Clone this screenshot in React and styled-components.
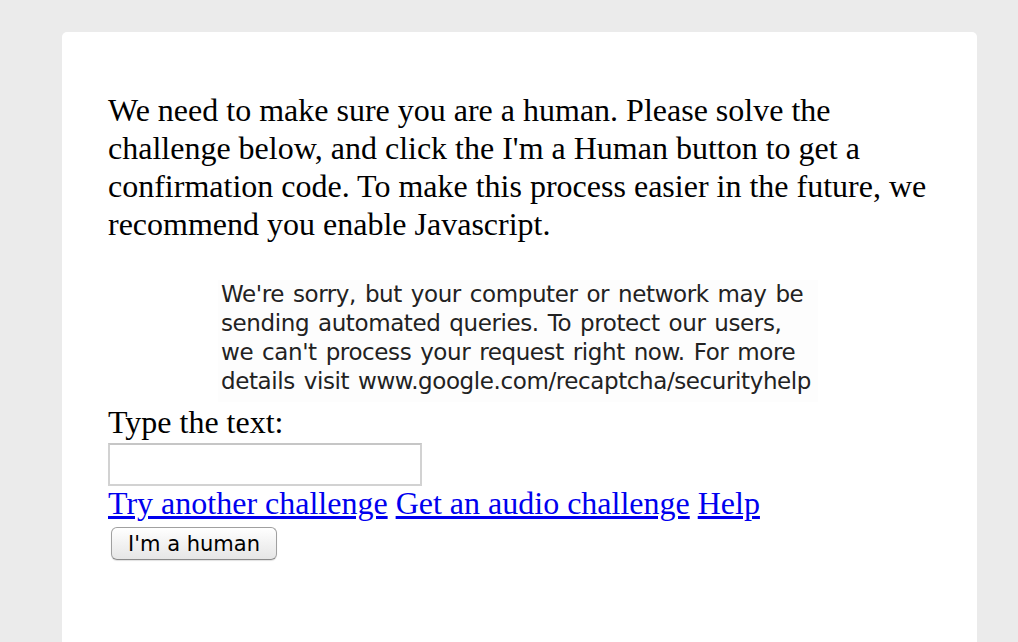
import React from "react";
import styled, { createGlobalStyle } from "styled-components";

const GlobalStyle = createGlobalStyle`
  html, body {
    margin: 0;
    padding: 0;
    background: #ebebeb;
  }
`;

const Page = styled.div`
  padding: 32px 41px 0 62px;
  height: 642px;
  box-sizing: border-box;
  overflow: hidden;
`;

const Card = styled.div`
  background: #fff;
  border-radius: 5px 5px 0 0;
  padding: 59px 30px 80px 46px;
  min-height: 610px;
  box-sizing: border-box;
  font-family: "Liberation Serif", "Times New Roman", serif;
  font-size: 32px;
  color: #000;
`;

const Intro = styled.p`
  margin: 0 0 37px 0;
  line-height: 38px;
  max-width: 840px;
`;

/* stand-in for the captcha picture: grey text on an off-white field */
const Captcha = styled.div`
  width: 600px;
  height: 122px;
  margin-left: 110px;
  box-sizing: border-box;
  padding: 0 0 0 3px;
  background: #fdfdfd;
  font-family: "DejaVu Sans", sans-serif;
  font-size: 23px;
  line-height: 29px;
  color: #222;
  letter-spacing: -0.4px;
  word-spacing: 2px;
  white-space: nowrap;
`;

const Label = styled.div`
  line-height: 41px;
`;

const TextInput = styled.input`
  display: block;
  width: 314px;
  height: 43px;
  box-sizing: border-box;
  border: 2px solid #d2d2d2;
  border-top-color: #c6c6c6;
  margin: 0;
  padding: 0;
  background: #fff;
`;

const Links = styled.div`
  line-height: 35px;
  a {
    color: #0000ee;
    margin-right: 8px;
  }
`;

const Button = styled.button`
  display: block;
  margin: 6px 0 0 3px;
  width: 166px;
  height: 33px;
  border: 1px solid #a0a0a0;
  border-bottom-color: #8a8a8a;
  border-radius: 6px;
  background: linear-gradient(#ffffff, #f2f2f2 50%, #e6e6e6);
  box-shadow: 0 1px 1px rgba(0, 0, 0, 0.12);
  font-family: "DejaVu Sans", sans-serif;
  font-size: 21px;
  color: #000;
  padding: 0;
`;

export default function App() {
  return (
    <>
      <GlobalStyle />
      <Page>
        <Card>
          <Intro>
            We need to make sure you are a human. Please solve the challenge
            below, and click the I'm a Human button to get a confirmation code.
            To make this process easier in the future, we recommend you enable
            Javascript.
          </Intro>
          <Captcha>
            We're sorry, but your computer or network may be
            <br />
            sending automated queries. To protect our users,
            <br />
            we can't process your request right now. For more
            <br />
            details visit www.google.com/recaptcha/securityhelp
          </Captcha>
          <Label>Type the text:</Label>
          <TextInput type="text" />
          <Links>
            <a href="#">Try another challenge</a>
            <a href="#">Get an audio challenge</a>
            <a href="#">Help</a>
          </Links>
          <Button type="button">I'm a human</Button>
        </Card>
      </Page>
    </>
  );
}
